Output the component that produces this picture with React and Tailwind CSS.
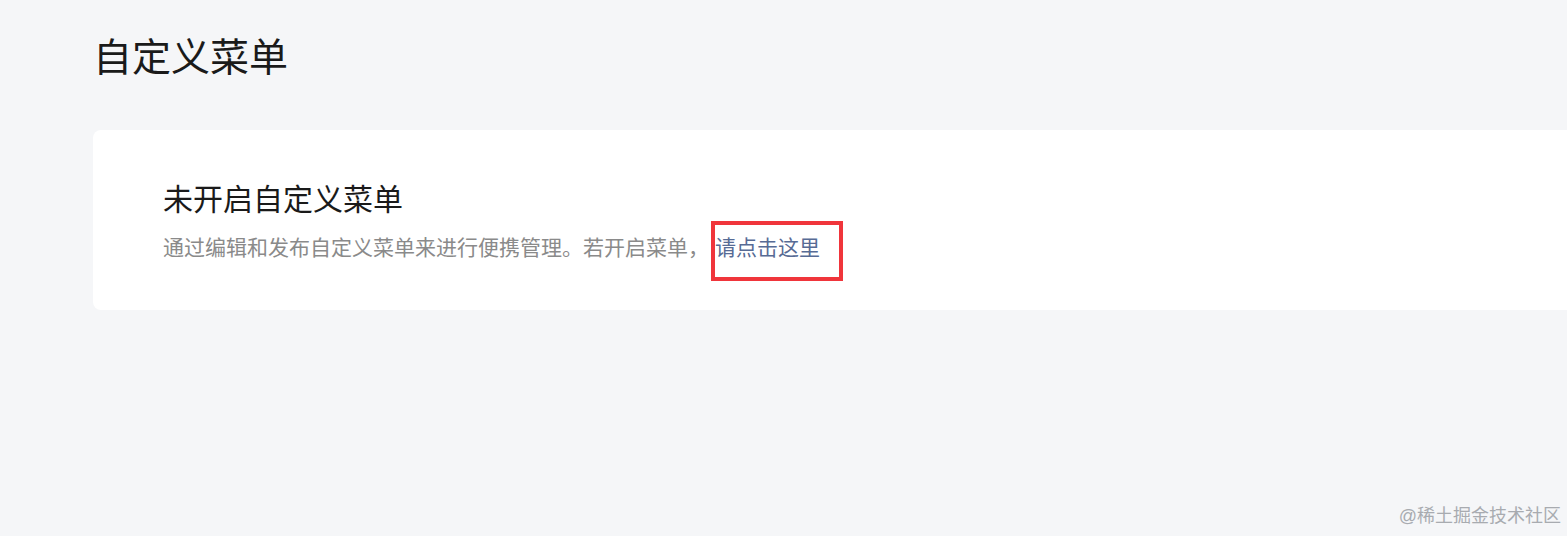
const App = () => {
  return (
    <div
      className="relative w-[1567px] h-[536px] overflow-hidden bg-[#f5f6f8]"
      style={{ fontFamily: '"Liberation Sans", "Noto Sans CJK SC", sans-serif' }}
    >
      <div className="pl-[93px] pt-[32px]">
        <h1 className="text-[39px] leading-[52px] text-[#1a1a1a] font-normal">自定义菜单</h1>
        <div className="mt-[46px] w-[1600px] h-[180px] bg-white rounded-lg pl-[70px] pt-[50px]">
          <h2 className="text-[30px] leading-[40px] text-[#1a1a1a] font-normal">未开启自定义菜单</h2>
          <p className="mt-[13px] flex items-start text-[21px] leading-[30px] text-[#8a8a8a]">
            <span>通过编辑和发布自定义菜单来进行便携管理。若开启菜单，</span>
            <span className="ml-[2px] -mt-[12px] -mb-[18px] w-[132px] h-[60px] border-4 border-[#f0353b] pt-[8px]">
              <a href="#" className="text-[#576b95]">请点击这里</a>
            </span>
          </p>
        </div>
      </div>
      <div className="absolute right-[6px] bottom-[6px] text-[18px] text-[#a8abb0]">@稀土掘金技术社区</div>
    </div>
  );
};

export default App;
